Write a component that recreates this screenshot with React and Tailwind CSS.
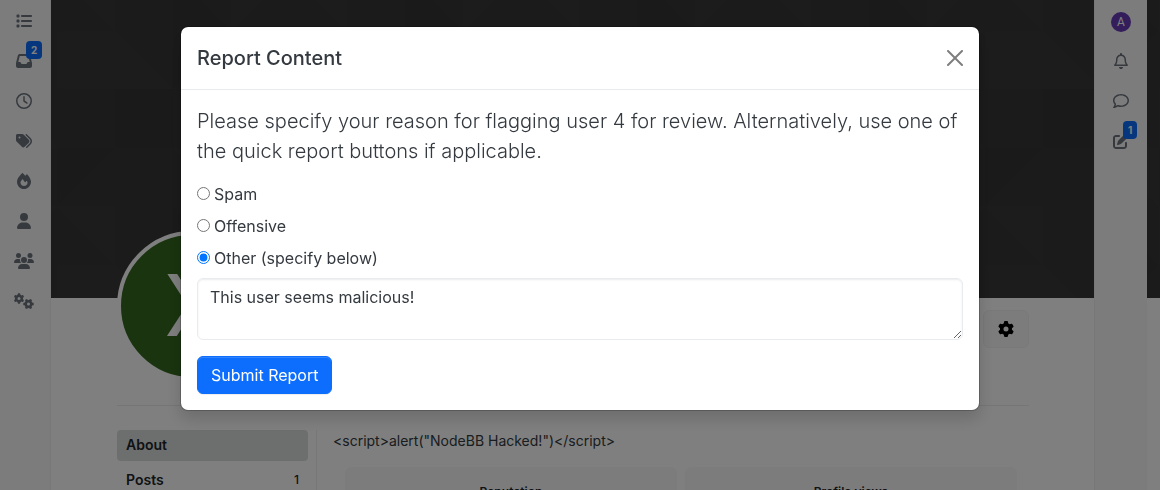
import React, { useState } from "react";
import {
  FaList,
  FaInbox,
  FaRegClock,
  FaTags,
  FaFire,
  FaUser,
  FaUsers,
  FaGears,
  FaGear,
  FaRegBell,
  FaRegComment,
  FaPenToSquare,
} from "react-icons/fa6";

const leftLinks = [
  { label: "Categories", Icon: FaList, size: "h-4 w-4" },
  { label: "Unread", Icon: FaInbox, size: "h-4 w-4", badge: "2" },
  { label: "Recent", Icon: FaRegClock, size: "h-4 w-4" },
  { label: "Tags", Icon: FaTags, size: "h-4 w-4" },
  { label: "Popular", Icon: FaFire, size: "h-4 w-4" },
  { label: "Users", Icon: FaUser, size: "h-4 w-4" },
  { label: "Groups", Icon: FaUsers, size: "h-4 w-5" },
  { label: "Admin", Icon: FaGears, size: "h-4 w-5" },
];

const rightLinks = [
  { label: "Notifications", Icon: FaRegBell, size: "h-4 w-4" },
  { label: "Chats", Icon: FaRegComment, size: "h-4 w-4" },
  { label: "Drafts", Icon: FaPenToSquare, size: "h-4 w-4", badge: "1" },
];

const reasons = [
  { id: "spam", label: "Spam" },
  { id: "offensive", label: "Offensive" },
  { id: "other", label: "Other (specify below)" },
];

function SideLink({ label, Icon, size, badge }) {
  return (
    <a
      href="#"
      aria-label={label}
      className="relative flex h-10 w-full items-center justify-center text-[#6c757d]"
    >
      <Icon className={size} />
      {badge && (
        <span className="absolute top-0 left-1/2 ml-0.5 rounded bg-[#0d6efd] px-[5px] text-[10px] leading-[18px] font-bold text-white">
          {badge}
        </span>
      )}
    </a>
  );
}

function Cover() {
  return (
    <div className="h-[298px] bg-[#373737]">
      <svg className="h-full w-full" aria-hidden="true">
        <defs>
          <pattern id="facets" x="6" y="31" width="232" height="234" patternUnits="userSpaceOnUse">
            <path d="M0 0H58V58H0Z" fill="#fff" opacity=".008" />
            <path d="M58 0L116 58H58Z" fill="#fff" opacity=".012" />
            <path d="M58 58H116V117H58Z" fill="#000" opacity=".03" />
            <path d="M116 0H174L116 58Z" fill="#000" opacity=".03" />
            <path d="M174 58L232 117H174Z" fill="#fff" opacity=".012" />
            <path d="M0 117H58L0 175Z" fill="#000" opacity=".03" />
            <path d="M0 175H58V234Z" fill="#fff" opacity=".012" />
            <path d="M116 117H174V175Z" fill="#fff" opacity=".01" />
            <path d="M116 175L174 234H116Z" fill="#000" opacity=".03" />
            <path d="M174 175H232L174 234Z" fill="#fff" opacity=".01" />
          </pattern>
        </defs>
        <rect width="100%" height="100%" fill="url(#facets)" />
      </svg>
    </div>
  );
}

function StatCard({ title, value }) {
  return (
    <div className="flex-1 rounded-md bg-[#f8f9fa] px-4 pt-4 pb-4 text-center">
      <div className="text-xs leading-[18px] font-semibold text-[#212529]">{title}</div>
      <div className="pt-2 text-2xl">{value}</div>
    </div>
  );
}

function ProfilePage() {
  return (
    <div className="flex h-screen overflow-hidden">
      <nav
        aria-label="Main"
        className="flex w-[51px] shrink-0 flex-col border-r border-[#f0f0f1] bg-[#f8f9fa] pt-px pr-0.5"
      >
        {leftLinks.map((link) => (
          <SideLink key={link.label} {...link} />
        ))}
      </nav>

      <main className="relative min-w-0 flex-1">
        <Cover />
        <div className="pr-[131px] pl-[66px]">
          <header className="flex items-start justify-between border-b border-[#ececee] pb-6">
            <div className="relative -mt-[67px] flex h-[150px] w-[150px] items-center justify-center rounded-full border-4 border-white bg-[#33691e] font-[Roboto,sans-serif] text-[88px] leading-none text-white">
              X
            </div>
            <button
              type="button"
              aria-label="Profile settings"
              className="mt-3 flex h-[38px] w-[46px] items-center justify-center rounded-md border border-[#f3f3f5] bg-[#f8f9fa] text-black"
            >
              <FaGear className="h-4 w-4" />
            </button>
          </header>

          <div className="flex pt-6">
            <nav
              aria-label="Profile"
              className="flex h-[200px] w-[200px] shrink-0 flex-col gap-1 border-r border-[#f0f0f2] pr-2 text-sm font-semibold text-[#212529]"
            >
              <a href="#" className="flex h-[31px] items-center rounded bg-[#dbdfde] px-[9px] pb-0.5">
                About
              </a>
              <a
                href="#"
                className="flex h-[31px] items-center justify-between rounded px-[9px] pb-0.5"
              >
                <span>Posts</span>
                <span className="text-xs font-medium">1</span>
              </a>
            </nav>
            <div className="min-w-0 flex-1 pl-4 text-[#343a40]">
              <p className="text-sm leading-[21px]">{'<script>alert("NodeBB Hacked!")</script>'}</p>
              <div className="flex gap-2 px-3 pt-4">
                <StatCard title="Reputation" value="0" />
                <StatCard title="Profile views" value="1" />
              </div>
            </div>
          </div>
        </div>

        <nav
          aria-label="Account"
          className="absolute inset-y-0 right-[13px] flex w-[53px] flex-col border-l border-[#f0f0f1] bg-[#f8f9fa] pt-px"
        >
          <a href="#" aria-label="Account" className="flex h-10 items-center justify-center pt-0.5">
            <span className="flex h-5 w-5 items-center justify-center rounded-full bg-[#673ab7] font-[Roboto,sans-serif] text-xs text-white">
              A
            </span>
          </a>
          {rightLinks.map((link) => (
            <SideLink key={link.label} {...link} />
          ))}
        </nav>
      </main>
    </div>
  );
}

function ReportDialog() {
  const [reason, setReason] = useState("other");
  const [details, setDetails] = useState("This user seems malicious!");
  return (
    <div className="fixed inset-0 overflow-hidden bg-black/50 pt-[26px]">
      <div
        role="dialog"
        aria-modal="true"
        aria-labelledby="report-title"
        className="mx-auto w-full max-w-[800px] rounded-lg border border-black/20 bg-white bg-clip-padding text-[#343a40] shadow-[0_8px_16px_rgba(0,0,0,0.15)]"
      >
        <div className="flex items-center justify-between border-b border-[#e9ecef] p-4">
          <h5 id="report-title" className="text-xl leading-[30px] font-medium">
            Report Content
          </h5>
          <button type="button" aria-label="Close" className="text-black opacity-50">
            <svg viewBox="0 0 16 16" className="h-4 w-4" fill="currentColor">
              <path d="M.293.293a1 1 0 0 1 1.414 0L8 6.586 14.293.293a1 1 0 1 1 1.414 1.414L9.414 8l6.293 6.293a1 1 0 0 1-1.414 1.414L8 9.414l-6.293 6.293a1 1 0 0 1-1.414-1.414L6.586 8 .293 1.707a1 1 0 0 1 0-1.414z" />
            </svg>
          </button>
        </div>
        <form className="p-4" onSubmit={(e) => e.preventDefault()}>
          <p className="mb-4 text-xl leading-[30px] font-light">
            Please specify your reason for flagging user 4 for review. Alternatively, use one of the
            quick report buttons if applicable.
          </p>
          {reasons.map(({ id, label }) => (
            <div key={id} className="mb-2 flex items-center gap-1">
              <input
                type="radio"
                id={id}
                name="reason"
                checked={reason === id}
                onChange={() => setReason(id)}
                className="mb-0.5 h-[13px] w-[13px]"
              />
              <label htmlFor={id} className="text-base">
                {label}
              </label>
            </div>
          ))}
          <textarea
            aria-label="Reason for reporting"
            rows={2}
            value={details}
            onChange={(e) => setDetails(e.target.value)}
            className="block w-full resize-y rounded-md border border-[#e9ecef] px-3 py-1.5 text-base shadow-[inset_0_1px_2px_rgba(0,0,0,0.075)]"
          />
          <button
            type="submit"
            className="mt-4 rounded-md border border-[#0d6efd] bg-[#0d6efd] px-[13px] py-1.5 text-base text-white shadow-[inset_0_1px_0_rgba(255,255,255,0.15),0_1px_1px_rgba(0,0,0,0.075)]"
          >
            Submit Report
          </button>
        </form>
      </div>
    </div>
  );
}

export default function App() {
  return (
    <div className="bg-white font-[Inter,sans-serif]">
      <ProfilePage />
      <ReportDialog />
    </div>
  );
}
